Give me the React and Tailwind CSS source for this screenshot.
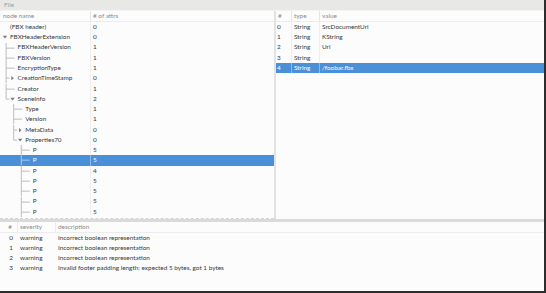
const font = { fontFamily: 'Lato, "Open Sans", "DejaVu Sans", sans-serif' };

const tree = [
  { name: "(FBX header)", n: 0, d: 0 },
  { name: "FBXHeaderExtension", n: 0, d: 0, exp: "open" },
  { name: "FBXHeaderVersion", n: 1, d: 1 },
  { name: "FBXVersion", n: 1, d: 1 },
  { name: "EncryptionType", n: 1, d: 1 },
  { name: "CreationTimeStamp", n: 0, d: 1, exp: "closed" },
  { name: "Creator", n: 1, d: 1 },
  { name: "SceneInfo", n: 2, d: 1, exp: "open", last: true },
  { name: "Type", n: 1, d: 2 },
  { name: "Version", n: 1, d: 2 },
  { name: "MetaData", n: 0, d: 2, exp: "closed" },
  { name: "Properties70", n: 0, d: 2, exp: "open", last: true },
  { name: "P", n: 5, d: 3 },
  { name: "P", n: 5, d: 3, sel: true },
  { name: "P", n: 4, d: 3 },
  { name: "P", n: 5, d: 3 },
  { name: "P", n: 5, d: 3 },
  { name: "P", n: 5, d: 3 },
  { name: "P", n: 5, d: 3 },
];

const props = [
  ["0", "String", "SrcDocumentUrl"],
  ["1", "String", "KString"],
  ["2", "String", "Url"],
  ["3", "String", ""],
  ["4", "String", "/foobar.fbx", true],
];

const issues = [
  ["0", "warning", "Incorrect boolean representation"],
  ["1", "warning", "Incorrect boolean representation"],
  ["2", "warning", "Incorrect boolean representation"],
  ["3", "warning", "Invalid footer padding length: expected 5 bytes, got 1 bytes"],
];

const RH = 10.28;

function Guides({ node }) {
  const tx = 10 + 7.6 * node.d;
  const my = RH / 2;
  const line = node.sel ? "#a9c9ef" : "#bdbdbd";
  const arrow = node.sel ? "#ffffff" : "#7a7a7a";
  const ex = tx - 5;
  const cx = tx - 11.5;
  return (
    <svg width={tx} height={RH} className="shrink-0">
      {node.d > 0 && (
        <>
          <line x1={cx} x2={cx} y1={0} y2={node.last ? my : RH} stroke={line} strokeWidth="1" />
          <line x1={cx} x2={node.exp ? ex - 3 : tx - 3} y1={my} y2={my} stroke={line} strokeWidth="1" />
        </>
      )}
      {node.exp === "open" && (
        <polygon points={`${ex - 2.2},${my - 1.3} ${ex + 2.2},${my - 1.3} ${ex},${my + 1.3}`} fill={arrow} />
      )}
      {node.exp === "closed" && (
        <polygon points={`${ex - 1.2},${my - 2.2} ${ex - 1.2},${my + 2.2} ${ex + 1.3},${my}`} fill={arrow} />
      )}
    </svg>
  );
}

export default function App() {
  return (
    <div
      className="w-[546px] h-[293px] bg-[#fcfcfc] flex flex-col overflow-hidden border-r-2 border-b-2 border-[#2d2d2d] text-[6.4px] text-[#33393b] leading-none"
      style={font}
    >
      <div className="h-[11px] shrink-0 bg-[#e8e8e7] border-b border-[#f4f4f4] flex items-center px-[4px] text-[#a0a0a0]">
        File
      </div>

      <div className="h-[208px] shrink-0 flex">
        <div className="w-[274px] shrink-0 border-b border-dashed border-[#d4d4d4] overflow-hidden">
          <div className="h-[11px] flex items-center text-[#8a8a8a] border-b border-[#ececec]">
            <div className="w-[91px] h-full flex items-center pl-[3px] border-r border-[#e6e6e6]">node name</div>
            <div className="pl-[2px]"># of attrs</div>
          </div>
          {tree.map((t, i) => (
            <div
              key={i}
              className={`h-[10.28px] flex items-center ${t.sel ? "bg-[#4a90d9] text-white" : ""}`}
            >
              <div className={`w-[91px] h-full flex items-center border-r ${t.sel ? "border-[#8db8e8]" : "border-[#efefef]"}`}>
                <Guides node={t} />
                <span>{t.name}</span>
              </div>
              <div className="pl-[2px]">{t.n}</div>
            </div>
          ))}
        </div>

        <div className="flex-1 border-l-2 border-[#e2e2e2] overflow-hidden">
          <div className="h-[11px] flex items-center text-[#8a8a8a] border-b border-[#ececec]">
            <div className="w-[16px] h-full flex items-center pl-[2px] border-r border-[#e6e6e6]">#</div>
            <div className="w-[28px] h-full flex items-center pl-[2px] border-r border-[#e6e6e6]">type</div>
            <div className="pl-[2px]">value</div>
          </div>
          {props.map((p, i) => (
            <div key={i} className={`h-[10.28px] flex items-center ${p[3] ? "bg-[#4a90d9] text-white" : ""}`}>
              <div className={`w-[16px] h-full flex items-center pl-[1px] border-r ${p[3] ? "border-[#8db8e8]" : "border-[#efefef]"}`}>{p[0]}</div>
              <div className={`w-[28px] h-full flex items-center pl-[2px] border-r ${p[3] ? "border-[#8db8e8]" : "border-[#efefef]"}`}>{p[1]}</div>
              <div className="pl-[2px]">{p[2]}</div>
            </div>
          ))}
        </div>
      </div>

      <div className="h-[3px] shrink-0 bg-[#dadada]" />

      <div className="flex-1">
        <div className="h-[11px] flex items-center text-[#8a8a8a] border-b border-[#ececec]">
          <div className="w-[18px] h-full flex items-center justify-end pr-[5px] border-r border-[#ececec]">#</div>
          <div className="w-[38px] h-full flex items-center pl-[2px] border-r border-[#ececec]">severity</div>
          <div className="pl-[2px]">description</div>
        </div>
        {issues.map((r, i) => (
          <div key={i} className="h-[10.2px] flex items-center">
            <div className="w-[18px] flex justify-end pr-[5px]">{r[0]}</div>
            <div className="w-[38px] pl-[2px]">{r[1]}</div>
            <div className="pl-[2px]">{r[2]}</div>
          </div>
        ))}
      </div>
    </div>
  );
}
